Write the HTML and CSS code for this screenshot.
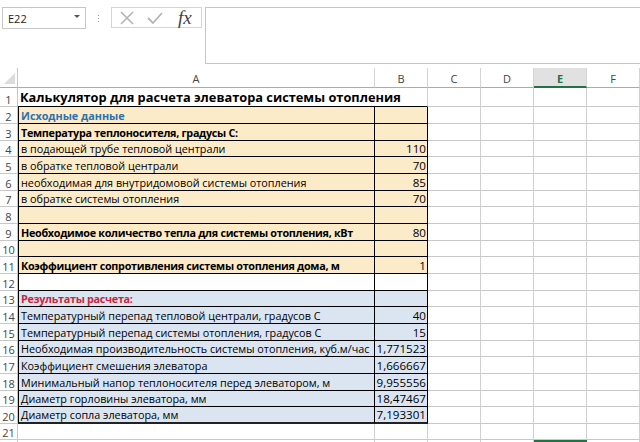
FILE: index.html
```html
<!DOCTYPE html>
<html lang="ru">
<head>
    <meta charset="UTF-8">
    <title>Калькулятор для расчета элеватора системы отопления</title>
    <link rel="stylesheet" href="styles.css">
</head>
<body>
    <div class="toolbar">
        <div class="name-box">
            <span>E22</span>
            <span class="arrow"></span>
        </div>
        <div class="grip"><i></i><i></i><i></i></div>
        <div class="fx-buttons">
            <svg class="btn-icon" width="14" height="14" viewBox="0 0 14 14">
                <path d="M1 1 L13 13 M13 1 L1 13" stroke="#b4b4b4" stroke-width="1.6" fill="none"/>
            </svg>
            <svg class="btn-icon" width="16" height="14" viewBox="0 0 16 14">
                <path d="M1 7 L6 12 L15 2" stroke="#b4b4b4" stroke-width="1.8" fill="none"/>
            </svg>
            <span class="fx">fx</span>
        </div>
        <div class="formula-input"></div>
    </div>

    <div class="sheet">
        <div class="row head">
            <div class="corner"><span></span></div>
            <div class="ch">A</div>
            <div class="ch">B</div>
            <div class="ch">C</div>
            <div class="ch">D</div>
            <div class="ch active">E</div>
            <div class="ch">F</div>
        </div>

        <div class="row first">
            <div class="rh">1</div>
            <div class="c a top-edge open"><span class="title">Калькулятор для расчета элеватора системы отопления</span></div>
            <div class="c b top-edge"></div>
            <div class="c"></div><div class="c"></div><div class="c"></div><div class="c"></div>
        </div>

        <div class="row">
            <div class="rh">2</div>
            <div class="c a t y"><span class="bold blue">Исходные данные</span></div>
            <div class="c b t y"></div>
            <div class="c"></div><div class="c"></div><div class="c"></div><div class="c"></div>
        </div>
        <div class="row">
            <div class="rh">3</div>
            <div class="c a t y"><span class="bold">Температура теплоносителя, градусы С:</span></div>
            <div class="c b t y"></div>
            <div class="c"></div><div class="c"></div><div class="c"></div><div class="c"></div>
        </div>
        <div class="row">
            <div class="rh">4</div>
            <div class="c a t y">в подающей трубе тепловой централи</div>
            <div class="c b t y">110</div>
            <div class="c"></div><div class="c"></div><div class="c"></div><div class="c"></div>
        </div>
        <div class="row">
            <div class="rh">5</div>
            <div class="c a t y">в обратке тепловой централи</div>
            <div class="c b t y">70</div>
            <div class="c"></div><div class="c"></div><div class="c"></div><div class="c"></div>
        </div>
        <div class="row">
            <div class="rh">6</div>
            <div class="c a t y">необходимая для внутридомовой системы отопления</div>
            <div class="c b t y">85</div>
            <div class="c"></div><div class="c"></div><div class="c"></div><div class="c"></div>
        </div>
        <div class="row">
            <div class="rh">7</div>
            <div class="c a t y">в обратке системы отопления</div>
            <div class="c b t y">70</div>
            <div class="c"></div><div class="c"></div><div class="c"></div><div class="c"></div>
        </div>
        <div class="row">
            <div class="rh">8</div>
            <div class="c a t y"></div>
            <div class="c b t y"></div>
            <div class="c"></div><div class="c"></div><div class="c"></div><div class="c"></div>
        </div>
        <div class="row">
            <div class="rh">9</div>
            <div class="c a t y"><span class="bold">Необходимое количество тепла для системы отопления, кВт</span></div>
            <div class="c b t y">80</div>
            <div class="c"></div><div class="c"></div><div class="c"></div><div class="c"></div>
        </div>
        <div class="row">
            <div class="rh">10</div>
            <div class="c a t y"></div>
            <div class="c b t y"></div>
            <div class="c"></div><div class="c"></div><div class="c"></div><div class="c"></div>
        </div>
        <div class="row">
            <div class="rh">11</div>
            <div class="c a t y"><span class="bold">Коэффициент сопротивления системы отопления дома, м</span></div>
            <div class="c b t y">1</div>
            <div class="c"></div><div class="c"></div><div class="c"></div><div class="c"></div>
        </div>
        <div class="row">
            <div class="rh">12</div>
            <div class="c a t"></div>
            <div class="c b t"></div>
            <div class="c"></div><div class="c"></div><div class="c"></div><div class="c"></div>
        </div>
        <div class="row">
            <div class="rh">13</div>
            <div class="c a t bl"><span class="bold red">Результаты расчета:</span></div>
            <div class="c b t bl"></div>
            <div class="c"></div><div class="c"></div><div class="c"></div><div class="c"></div>
        </div>
        <div class="row">
            <div class="rh">14</div>
            <div class="c a t bl">Температурный перепад тепловой централи, градусов С</div>
            <div class="c b t bl">40</div>
            <div class="c"></div><div class="c"></div><div class="c"></div><div class="c"></div>
        </div>
        <div class="row">
            <div class="rh">15</div>
            <div class="c a t bl">Температурный перепад системы отопления, градусов С</div>
            <div class="c b t bl">15</div>
            <div class="c"></div><div class="c"></div><div class="c"></div><div class="c"></div>
        </div>
        <div class="row">
            <div class="rh">16</div>
            <div class="c a t bl">Необходимая производительность системы отопления, куб.м/час</div>
            <div class="c b t bl">1,771523</div>
            <div class="c"></div><div class="c"></div><div class="c"></div><div class="c"></div>
        </div>
        <div class="row">
            <div class="rh">17</div>
            <div class="c a t bl">Коэффициент смешения элеватора</div>
            <div class="c b t bl">1,666667</div>
            <div class="c"></div><div class="c"></div><div class="c"></div><div class="c"></div>
        </div>
        <div class="row">
            <div class="rh">18</div>
            <div class="c a t bl">Минимальный напор теплоносителя перед элеватором, м</div>
            <div class="c b t bl">9,955556</div>
            <div class="c"></div><div class="c"></div><div class="c"></div><div class="c"></div>
        </div>
        <div class="row">
            <div class="rh">19</div>
            <div class="c a t bl">Диаметр горловины элеватора, мм</div>
            <div class="c b t bl">18,47467</div>
            <div class="c"></div><div class="c"></div><div class="c"></div><div class="c"></div>
        </div>
        <div class="row">
            <div class="rh">20</div>
            <div class="c a t bl last">Диаметр сопла элеватора, мм</div>
            <div class="c b t bl last">7,193301</div>
            <div class="c"></div><div class="c"></div><div class="c"></div><div class="c"></div>
        </div>
        <div class="row short">
            <div class="rh">21</div>
            <div class="c a"></div>
            <div class="c b"></div>
            <div class="c"></div><div class="c"></div><div class="c"></div><div class="c"></div>
        </div>
        <div class="row">
            <div class="rh"></div>
            <div class="c a"></div>
            <div class="c b"></div>
            <div class="c"></div><div class="c"></div><div class="c selected"></div><div class="c"></div>
        </div>
    </div>
</body>
</html>
```

FILE: styles.css
```css
body {
    margin: 0;
    width: 640px;
    height: 442px;
    overflow: hidden;
    background-color: #fff;
    font-family: "Open Sans", sans-serif;
    color: #000;
}

/* Formula bar */
.toolbar {
    display: flex;
    align-items: flex-start;
    padding-top: 7px;
    height: 61px;
    box-sizing: border-box;
}
.name-box {
    margin-left: 2px;
    width: 84px;
    height: 22px;
    box-sizing: border-box;
    border: 1px solid #c6c6c6;
    display: flex;
    align-items: center;
    justify-content: space-between;
    padding: 0 5px 0 5px;
    font-size: 11px;
    color: #222;
}
.arrow {
    width: 0;
    height: 0;
    border-left: 3px solid transparent;
    border-right: 3px solid transparent;
    border-top: 3px solid #555;
    margin-bottom: 3px;
}
.grip {
    width: 25px;
    height: 22px;
    display: flex;
    flex-direction: column;
    align-items: center;
    justify-content: center;
    gap: 2px;
}
.grip i {
    width: 1px;
    height: 1px;
    background-color: #999;
}
.fx-buttons {
    width: 91px;
    height: 21px;
    box-sizing: border-box;
    border: 1px solid #d4d4d4;
    display: flex;
    align-items: center;
    padding-left: 8px;
    gap: 13px;
}
.fx {
    font-family: "Liberation Serif", serif;
    font-style: italic;
    font-size: 19px;
    color: #444;
    margin-left: 2px;
    line-height: 1;
}
.formula-input {
    flex: 1;
    margin-left: 3px;
    height: 55px;
    border: 1px solid #c6c6c6;
    border-right: none;
}

/* Grid */
.sheet {
    margin-top: 7px;
    font-size: 10.8px;
}
.row {
    display: grid;
    grid-template-columns: 18px 357px 53px 53px 53px 53px 53px;
    grid-template-rows: 100%;
    height: 17px;
}
/* rows are 17, 17, 16 px in turn, like the zoomed sheet */
.row:nth-child(3n+5),
.row.short {
    height: 16px;
}
.row.head {
    height: 20px;
}
.row.first {
    height: 19px;
}
.corner {
    position: relative;
    border-right: 1px solid #c8c8c8;
    border-bottom: 1px solid #ababab;
}
.corner span {
    position: absolute;
    right: 2px;
    bottom: 3px;
    width: 0;
    height: 0;
    border-left: 11px solid transparent;
    border-bottom: 11px solid #dcdcdc;
}
.ch {
    display: flex;
    align-items: center;
    justify-content: center;
    font-size: 11px;
    color: #444;
    border-right: 1px solid #d4d4d4;
    border-bottom: 1px solid #ababab;
    padding-top: 2px;
}
.ch.active {
    background-color: #e1e1e1;
    color: #217346;
    font-weight: bold;
    border-bottom: 2px solid #217346;
}
.rh {
    box-sizing: border-box;
    display: flex;
    align-items: flex-end;
    justify-content: center;
    font-size: 11px;
    line-height: 1;
    color: #444;
    border-right: 1px solid #c8c8c8;
    border-bottom: 1px solid #c8c8c8;
    padding-bottom: 1px;
}
.c {
    box-sizing: border-box;
    min-height: 0;
    border-right: 1px solid #d0d0d0;
    border-bottom: 1px solid #c8c8c8;
    padding: 0 2px 1px 2px;
    display: flex;
    align-items: flex-end;
    white-space: nowrap;
    line-height: 1;
}
.b {
    justify-content: flex-end;
    font-size: 11.6px;
    padding-right: 1px;
}
.open {
    border-right: none;
}
.title {
    font-weight: bold;
    font-size: 12.8px;
    padding-bottom: 1px;
}
.top-edge {
    border-bottom: 1px solid #000;
}
.t {
    border-right: 1px solid #000;
    border-bottom: 1px solid #000;
}
.a.t {
    border-left: 1px solid #000;
}
.y {
    background-color: #fcebc9;
}
.bl {
    background-color: #dbe5f1;
}
.last {
    border-bottom: 2px solid #222;
}
.bold {
    font-weight: bold;
    letter-spacing: -0.3px;
}
.blue {
    color: #2a72b0;
    letter-spacing: 0;
}
.red {
    color: #c8263f;
}
.selected {
    border: 2px solid #217346;
    border-bottom: none;
}
```
